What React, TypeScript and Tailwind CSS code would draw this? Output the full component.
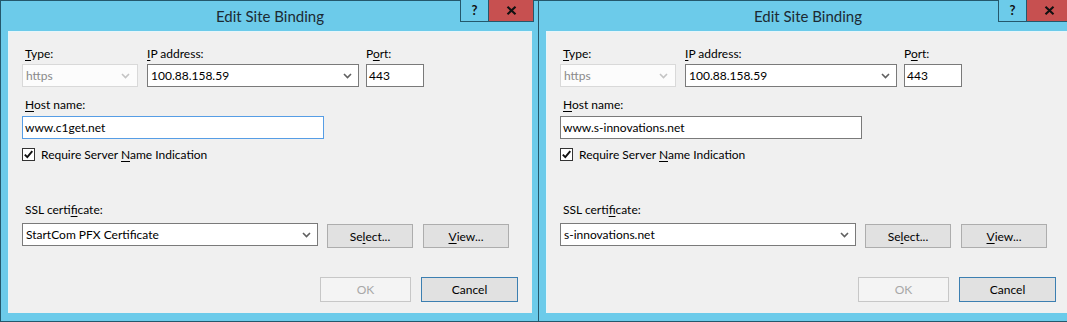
import React from "react";

function Chevron({ color = "#606060" }: { color?: string }) {
  return (
    <svg width="9" height="6" viewBox="0 0 9 6" className="block">
      <path d="M1 1 L4.5 4.5 L8 1" stroke={color} strokeWidth="1.6" fill="none" />
    </svg>
  );
}

function U({ children }: { children: React.ReactNode }) {
  return <span className="underline underline-offset-[2px] decoration-1">{children}</span>;
}

function Dialog({ host, cert, focused }: { host: string; cert: string; focused?: boolean }) {
  return (
    <div className="relative w-[540px] h-[322px] shrink-0 bg-[#6ccbea] border border-[#24586c] flex flex-col">
      <div className="h-[30px] flex items-center justify-center text-[15px] text-[#1c2a33] pt-[1px]">
        Edit Site Binding
      </div>
      <div className="absolute top-[-1px] right-[5px] flex h-[22px]">
        <div className="w-[28px] h-full border-l border-b border-[#24586c] bg-[#6ccbea] flex items-center justify-center text-[13px] font-bold text-[#111]">
          ?
        </div>
        <div className="w-[46px] h-full border-l border-b border-r border-[#24586c] bg-[#c75050] flex items-center justify-center">
          <svg width="11" height="9" viewBox="0 0 11 9">
            <path d="M1.5 0.8 L9.5 8.2 M9.5 0.8 L1.5 8.2" stroke="#111" strokeWidth="2.1" />
          </svg>
        </div>
      </div>
      <div className="mx-[7px] h-[282px] bg-[#f0f0f0] border-l border-t border-[#e6f6fb] pl-[13px] flex flex-col text-[12px] leading-[15px] text-black">
        <div className="flex mt-[14px]">
          <div className="w-[125px] pl-[3px]">
            <U>T</U>ype:
          </div>
          <div className="w-[219px]">
            <U>I</U>P address:
          </div>
          <div>
            P<U>o</U>rt:
          </div>
        </div>
        <div className="flex mt-[3px]">
          <div className="w-[116px] h-[23px] border border-[#d9d9d9] bg-[#fcfcfc] flex items-center pl-[3px] pr-[7px] text-[#8a8a8a]">
            <span className="flex-1">https</span>
            <Chevron color="#c4c4c4" />
          </div>
          <div className="ml-[9px] w-[212px] h-[23px] border border-[#7a7a7a] bg-white flex items-center pl-[3px] pr-[6px]">
            <span className="flex-1">100.88.158.59</span>
            <Chevron />
          </div>
          <div className="ml-[7px] w-[58px] h-[23px] border border-[#7a7a7a] bg-white flex items-center pl-[2px]">
            443
          </div>
        </div>
        <div className="mt-[10px] pl-[3px]">
          <U>H</U>ost name:
        </div>
        <div
          className={
            "mt-[4px] w-[302px] h-[23px] border bg-white flex items-center pl-[2px] " +
            (focused ? "border-[#569de5]" : "border-[#7a7a7a]")
          }
        >
          {host}
        </div>
        <div className="mt-[9px] flex items-center h-[13px]">
          <div className="w-[13px] h-[13px] border border-[#333] bg-white flex items-center justify-center">
            <svg width="11" height="11" viewBox="0 0 11 11">
              <path d="M1.8 5.6 L4.3 8.2 L9.3 2.2" stroke="#111" strokeWidth="1.9" fill="none" />
            </svg>
          </div>
          <span className="ml-[6px]">
            Require Server <U>N</U>ame Indication
          </span>
        </div>
        <div className="mt-[41px] pl-[3px]">
          SSL certi<U>f</U>icate:
        </div>
        <div className="mt-[6px] flex items-start">
          <div className="w-[296px] h-[23px] border border-[#7a7a7a] bg-white flex items-center pl-[3px] pr-[6px]">
            <span className="flex-1">{cert}</span>
            <Chevron />
          </div>
          <div className="ml-[9px] mt-[1px] w-[86px] h-[24px] border border-[#adadad] bg-[#e1e1e1] flex items-center justify-center">
            Se<U>l</U>ect...
          </div>
          <div className="ml-[10px] mt-[1px] w-[86px] h-[24px] border border-[#adadad] bg-[#e1e1e1] flex items-center justify-center">
            <U>V</U>iew...
          </div>
        </div>
        <div className="mt-[29px] flex justify-end pr-[14px]">
          <div className="w-[91px] h-[25px] border border-[#c7c7c7] bg-[#f4f4f4] flex items-center justify-center text-[#a8a8a8]">
            OK
          </div>
          <div className="ml-[10px] w-[97px] h-[25px] border border-[#3c7fb1] bg-[#e1e1e1] flex items-center justify-center">
            Cancel
          </div>
        </div>
      </div>
    </div>
  );
}

export default function App() {
  return (
    <div className="w-[1067px] h-[322px] overflow-hidden flex bg-[#6ccbea] font-['Lato','Liberation_Sans',sans-serif]">
      <Dialog host="www.c1get.net" cert="StartCom PFX Certificate" focused />
      <div className="-ml-[2px] shrink-0">
        <Dialog host="www.s-innovations.net" cert="s-innovations.net" />
      </div>
    </div>
  );
}
